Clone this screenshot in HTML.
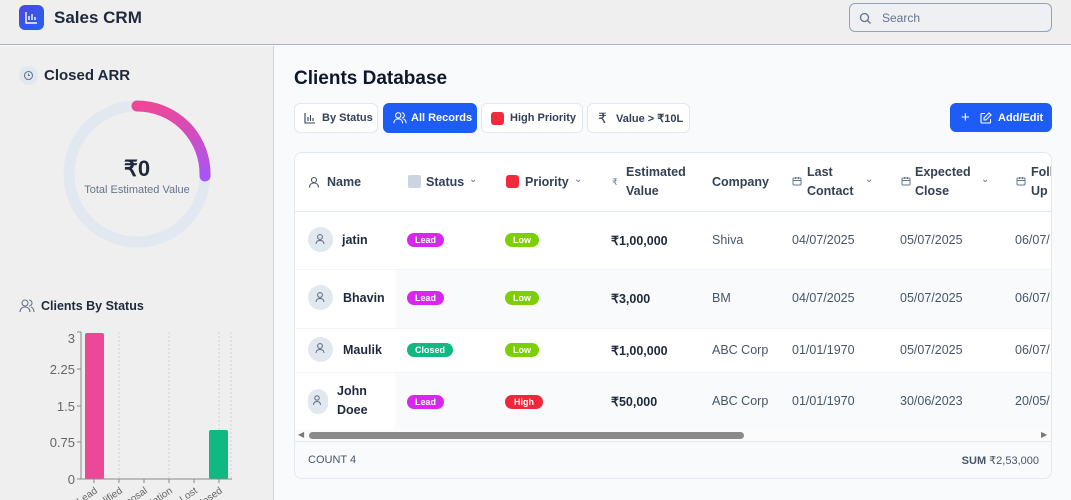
<!DOCTYPE html>
<html><head><meta charset="utf-8"><style>
*{box-sizing:border-box;margin:0;padding:0}
body{width:1071px;height:500px;overflow:hidden;font-family:"Liberation Sans",sans-serif;background:#f8fafc;color:#1e293b;position:relative}
.hdr{position:absolute;left:0;top:0;width:1071px;height:45px;background:#efefef;border-bottom:1px solid #a8b4c4}
.logo{position:absolute;left:19px;top:5px;width:25px;height:25px;border-radius:6px;background:linear-gradient(135deg,#4f46e5,#2563eb)}
.brand{position:absolute;left:54px;top:8px;font-size:17px;font-weight:bold;color:#1e293b}
.search{position:absolute;left:849px;top:3px;width:203px;height:29px;border:1px solid #94a3b8;border-radius:6px;background:#eef0f3}
.search span{position:absolute;left:32px;top:7px;font-size:12px;color:#64748b}
.side{position:absolute;left:0;top:46px;width:274px;height:454px;background:#efefef;border-right:1px solid #cbd5e1;overflow:hidden}
.abs{position:absolute}
.t{position:absolute;white-space:nowrap}
.card{position:absolute;left:294px;top:152px;width:758px;height:327px;background:#fff;border:1px solid #e2e8f0;border-radius:8px;overflow:hidden}
.th{font-size:12.5px;color:#334155;font-weight:bold}
.td{font-size:12.5px;color:#475569}
.badge{position:absolute;height:14px;border-radius:7px;color:#fff;font-size:9px;font-weight:bold;line-height:14px;text-align:center}
.av{position:absolute;width:25px;height:25px;border-radius:50%;background:#e2e8f0}
.btn{position:absolute;top:103px;height:30px;border:1px solid #e2e8f0;border-radius:6px;background:#fff;font-size:11px;font-weight:bold;color:#334155}
</style></head><body>
<div class="hdr">
<div class="logo"><svg width="25" height="25" viewBox="0 0 25 25"><path d="M7 7v11h11M10 15v-4M13 15v-6M16 15v-3" stroke="#fff" stroke-width="1.4" fill="none"/></svg></div>
<div class="brand">Sales CRM</div>
<div class="search"><svg class="abs" style="left:9px;top:8px" width="13" height="13" viewBox="0 0 13 13"><circle cx="5.5" cy="5.5" r="4" stroke="#64748b" stroke-width="1.3" fill="none"/><path d="M8.5 8.5l3 3" stroke="#64748b" stroke-width="1.3"/></svg><span>Search</span></div>
</div>
<div class="side">
<div class="abs" style="left:19px;top:20px;width:19px;height:19px;border-radius:50%;background:#e2e8f0"><svg width="19" height="19" viewBox="0 0 19 19"><circle cx="9.5" cy="9.5" r="4" stroke="#64748b" stroke-width="1.1" fill="none"/><path d="M9.5 7.5v2h1.5" stroke="#64748b" stroke-width="1.1" fill="none"/></svg></div>
<div class="t" style="left:44px;top:21px;font-size:15px;font-weight:bold">Closed ARR</div>
<svg class="abs" style="left:62px;top:54px" width="150" height="150" viewBox="0 0 150 150"><defs><linearGradient id="g" x1="0" y1="0" x2="0" y2="1"><stop offset="0" stop-color="#ec4899"/><stop offset="1" stop-color="#a855f7"/></linearGradient></defs><circle cx="75" cy="74" r="68" stroke="#e2e8f0" stroke-width="11" fill="none"/><path d="M75 6A68 68 0 0 1 143 76" stroke="url(#g)" stroke-width="11" fill="none" stroke-linecap="round"/></svg>
<div class="t" style="left:0;width:274px;text-align:center;top:110px;font-size:22px;font-weight:bold">₹0</div>
<div class="t" style="left:0;width:274px;text-align:center;top:138px;font-size:11px;color:#64748b">Total Estimated Value</div>
<svg class="abs" style="left:19px;top:252px" width="16" height="16" viewBox="0 0 16 16"><circle cx="6" cy="5" r="3" stroke="#64748b" stroke-width="1.1" fill="none"/><path d="M1 14c0-3 2-5 5-5s5 2 5 5M10 2a3 3 0 0 1 0 6M12 9c2 1 3 3 3 5" stroke="#64748b" stroke-width="1.1" fill="none"/></svg>
<div class="t" style="left:41px;top:253px;font-size:12.5px;font-weight:bold">Clients By Status</div>
<svg class="abs" style="left:0;top:234px" width="274" height="230" viewBox="0 280 274 230">
<g stroke="#cbd5e1" stroke-dasharray="2 2"><path d="M119 332V479M169 332V479M219 332V479M231 332V479"/></g>
<rect x="85" y="333" width="19" height="146" rx="2" fill="#ec4899"/>
<rect x="209" y="430" width="19" height="49" rx="2" fill="#10b981"/>
<path d="M81 332V479H232M77 332h4M77 369h4M77 406h4M77 442h4M77 479h4M94 479v4M119 479v4M144 479v4M169 479v4M194 479v4M219 479v4" stroke="#888" stroke-width="1" fill="none"/>
<g font-size="13" fill="#666" text-anchor="end" font-family="Liberation Sans"><text x="75" y="343">3</text><text x="75" y="374">2.25</text><text x="75" y="411">1.5</text><text x="75" y="447">0.75</text><text x="75" y="484">0</text></g>
<g font-size="10" fill="#666" font-family="Liberation Sans" text-anchor="end"><text transform="translate(98,492) rotate(-35)">Lead</text><text transform="translate(123,492) rotate(-35)">Qualified</text><text transform="translate(148,492) rotate(-35)">Proposal</text><text transform="translate(173,492) rotate(-35)">Negotiation</text><text transform="translate(198,492) rotate(-35)">Lost</text><text transform="translate(223,492) rotate(-35)">Closed</text></g>
</svg>
</div>
<div class="t" style="left:294px;top:68px;font-size:19px;font-weight:bold;color:#0f172a">Clients Database</div>
<div class="btn" style="left:294px;width:84px"><svg class="abs" style="left:9px;top:8px" width="12" height="12" viewBox="0 0 12 12"><path d="M1 1v10h10M4 9V5M6.5 9V3M9 9V6" stroke="#334155" stroke-width="1.1" fill="none"/></svg><span class="t" style="left:27px;top:8px">By Status</span></div>
<div class="btn" style="left:383px;width:94px;background:#1d5cf5;border-color:#1d5cf5;color:#fff"><svg class="abs" style="left:9px;top:7px" width="14" height="14" viewBox="0 0 16 16"><circle cx="6" cy="5" r="3" stroke="#fff" stroke-width="1.2" fill="none"/><path d="M1 14c0-3 2-5 5-5s5 2 5 5M10 2a3 3 0 0 1 0 6M12 9c2 1 3 3 3 5" stroke="#fff" stroke-width="1.2" fill="none"/></svg><span class="t" style="left:27px;top:8px">All Records</span></div>
<div class="btn" style="left:481px;width:102px"><span class="abs" style="left:9px;top:8px;width:13px;height:13px;border-radius:3px;background:#ef2b3c"></span><span class="t" style="left:28px;top:8px">High Priority</span></div>
<div class="btn" style="left:587px;width:103px"><span class="t" style="left:10px;top:6px;font-size:14px;font-weight:normal">₹</span><span class="t" style="left:28px;top:8px">Value &gt; ₹10L</span></div>
<div class="btn" style="left:950px;width:102px;height:29px;background:#1d5cf5;border-color:#1d5cf5;color:#fff"><span class="t" style="left:10px;top:5px;font-size:15px;font-weight:normal">+</span><svg class="abs" style="left:29px;top:8px" width="12" height="12" viewBox="0 0 12 12"><path d="M5 1.5H2a1 1 0 0 0-1 1V10a1 1 0 0 0 1 1h7.5a1 1 0 0 0 1-1V7M9 1l2 2-5 5H4V6z" stroke="#fff" stroke-width="1.1" fill="none"/></svg><span class="t" style="left:47px;top:8px">Add/Edit</span></div>

<div class="card">
<div class="abs" style="left:0;top:58px;width:758px;height:1px;background:#e2e8f0"></div>
<div class="abs" style="left:100px;top:117px;width:658px;height:58px;background:#f8fafc"></div>
<div class="abs" style="left:100px;top:220px;width:658px;height:56px;background:#f8fafc"></div>
<div class="abs" style="left:0;top:116px;width:758px;height:1px;background:#f1f5f9"></div>
<div class="abs" style="left:0;top:175px;width:758px;height:1px;background:#f1f5f9"></div>
<div class="abs" style="left:0;top:219px;width:758px;height:1px;background:#f1f5f9"></div>
<svg class="abs" style="left:13px;top:23px" width="12" height="12" viewBox="0 0 12 12"><circle cx="6" cy="4" r="2.5" stroke="#475569" stroke-width="1.1" fill="none"/><path d="M1.5 11.5c0-3 2-4.5 4.5-4.5s4.5 1.5 4.5 4.5" stroke="#475569" stroke-width="1.1" fill="none"/></svg>
<div class="t th" style="left:32px;top:22px">Name</div>
<span class="abs" style="left:113px;top:22px;width:13px;height:13px;border-radius:2px;background:#cbd5e1"></span>
<div class="t th" style="left:131px;top:22px">Status</div><div class="t" style="left:174px;top:21px;font-size:10px;color:#64748b">⌄</div>
<span class="abs" style="left:211px;top:22px;width:13px;height:13px;border-radius:3px;background:#ef2b3c"></span>
<div class="t th" style="left:230px;top:22px">Priority</div><div class="t" style="left:279px;top:21px;font-size:10px;color:#64748b">⌄</div>
<div class="t" style="left:317px;top:24px;font-size:9px;color:#64748b">₹</div>
<div class="t th" style="left:331px;top:10px;line-height:19px">Estimated<br>Value</div>
<div class="t th" style="left:417px;top:22px">Company</div>
<svg class="abs" style="left:497px;top:23px" width="10" height="10" viewBox="0 0 10 10"><rect x="1" y="2" width="8" height="7" rx="1" stroke="#64748b" fill="none"/><path d="M1 4.5h8M3.5 1v2M6.5 1v2" stroke="#64748b"/></svg>
<div class="t th" style="left:512px;top:10px;line-height:19px">Last<br>Contact</div><div class="t" style="left:570px;top:21px;font-size:10px;color:#64748b">⌄</div>
<svg class="abs" style="left:606px;top:23px" width="10" height="10" viewBox="0 0 10 10"><rect x="1" y="2" width="8" height="7" rx="1" stroke="#64748b" fill="none"/><path d="M1 4.5h8M3.5 1v2M6.5 1v2" stroke="#64748b"/></svg>
<div class="t th" style="left:620px;top:10px;line-height:19px">Expected<br>Close</div><div class="t" style="left:686px;top:21px;font-size:10px;color:#64748b">⌄</div>
<svg class="abs" style="left:721px;top:23px" width="10" height="10" viewBox="0 0 10 10"><rect x="1" y="2" width="8" height="7" rx="1" stroke="#64748b" fill="none"/><path d="M1 4.5h8M3.5 1v2M6.5 1v2" stroke="#64748b"/></svg>
<div class="t th" style="left:736px;top:10px;line-height:19px">Foll<br>Up</div>
<div class="av" style="left:13px;top:74px"></div><div class="t th" style="left:47px;top:80px;color:#1e293b">jatin</div>
<div class="badge" style="left:112px;top:80px;width:37px;background:#d926ef">Lead</div>
<div class="badge" style="left:210px;top:80px;width:34px;background:#7ccf00">Low</div>
<div class="t th" style="left:316px;top:80px;color:#1e293b">₹1,00,000</div>
<div class="t td" style="left:417px;top:80px">Shiva</div><div class="t td" style="left:497px;top:80px">04/07/2025</div><div class="t td" style="left:605px;top:80px">05/07/2025</div><div class="t td" style="left:720px;top:80px">06/07/</div>

<div class="av" style="left:13px;top:132px"></div><div class="t th" style="left:48px;top:138px;color:#1e293b">Bhavin</div>
<div class="badge" style="left:112px;top:138px;width:37px;background:#d926ef">Lead</div>
<div class="badge" style="left:210px;top:138px;width:34px;background:#7ccf00">Low</div>
<div class="t th" style="left:316px;top:138px;color:#1e293b">₹3,000</div>
<div class="t td" style="left:417px;top:138px">BM</div><div class="t td" style="left:497px;top:138px">04/07/2025</div><div class="t td" style="left:605px;top:138px">05/07/2025</div><div class="t td" style="left:720px;top:138px">06/07/</div>

<div class="av" style="left:13px;top:184px"></div><div class="t th" style="left:48px;top:190px;color:#1e293b">Maulik</div>
<div class="badge" style="left:112px;top:190px;width:46px;background:#0fb981">Closed</div>
<div class="badge" style="left:210px;top:190px;width:34px;background:#7ccf00">Low</div>
<div class="t th" style="left:316px;top:190px;color:#1e293b">₹1,00,000</div>
<div class="t td" style="left:417px;top:190px">ABC Corp</div><div class="t td" style="left:497px;top:190px">01/01/1970</div><div class="t td" style="left:605px;top:190px">05/07/2025</div><div class="t td" style="left:720px;top:190px">06/07/</div>

<div class="av" style="left:13px;top:236px;width:20px;height:25px;border-radius:10px"></div><div class="t th" style="left:42px;top:229px;line-height:19px;color:#1e293b">John<br>Doee</div>
<div class="badge" style="left:112px;top:242px;width:37px;background:#d926ef">Lead</div>
<div class="badge" style="left:210px;top:242px;width:38px;background:#f0263b">High</div>
<div class="t th" style="left:316px;top:241px;color:#1e293b">₹50,000</div>
<div class="t td" style="left:417px;top:241px">ABC Corp</div><div class="t td" style="left:497px;top:241px">01/01/1970</div><div class="t td" style="left:605px;top:241px">30/06/2023</div><div class="t td" style="left:720px;top:241px">20/05/</div>
<div class="abs" style="left:0;top:276px;width:758px;height:12px;background:#fbfbfb"></div>
<div class="t" style="left:3px;top:277px;font-size:8px;color:#777">◀</div>
<div class="t" style="left:746px;top:277px;font-size:8px;color:#777">▶</div>
<div class="abs" style="left:14px;top:279px;width:435px;height:7px;border-radius:4px;background:#8a8a8a"></div>
<div class="abs" style="left:0;top:288px;width:758px;height:39px;background:#f8fafc;border-top:1px solid #e2e8f0"></div>
<div class="t" style="left:13px;top:301px;font-size:11px;color:#475569">COUNT 4</div>
<div class="t" style="right:12px;top:301px;font-size:11px;color:#475569"><b>SUM</b> ₹2,53,000</div>
</div>
<svg class="abs" style="left:0;top:0;pointer-events:none" width="1071" height="500"><g stroke="#64748b" stroke-width="1.1" fill="none"><circle cx="320" cy="237" r="2.4"/><path d="M316 244c0-2.5 1.8-3.6 4-3.6s4 1.1 4 3.6"/><circle cx="320" cy="295" r="2.4"/><path d="M316 302c0-2.5 1.8-3.6 4-3.6s4 1.1 4 3.6"/><circle cx="320" cy="346" r="2.4"/><path d="M316 353c0-2.5 1.8-3.6 4-3.6s4 1.1 4 3.6"/><circle cx="317" cy="398" r="2.2"/><path d="M313.5 405c0-2.5 1.6-3.4 3.5-3.4s3.5 .9 3.5 3.4"/></g></svg>
</body></html>
